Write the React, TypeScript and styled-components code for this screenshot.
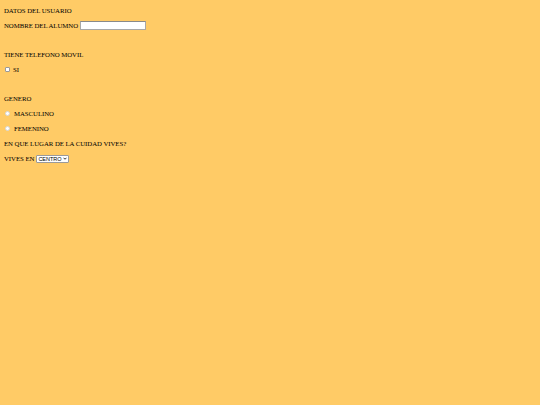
import React from 'react';
import styled, { createGlobalStyle } from 'styled-components';

const GlobalStyle = createGlobalStyle`
  html, body {
    margin: 0;
    padding: 0;
    background: #ffcb66;
  }
  body {
    font-family: 'Liberation Serif', 'Times New Roman', serif;
    color: #000;
  }
`;

const Page = styled.form`
  min-height: 405px;
  box-sizing: border-box;
  padding: 6px 4px 0 4px;
  display: flex;
  flex-direction: column;
  gap: 6px;
  background: #ffcb66;
`;

const Row = styled.div<{ $spaced?: boolean }>`
  display: flex;
  align-items: center;
  height: 9px;
  line-height: 9px;
  font-size: 6.8px;
  letter-spacing: -0.05px;
  white-space: nowrap;
  margin-top: ${(props) => (props.$spaced ? '14px' : '0')};
`;

const TextInput = styled.input`
  box-sizing: border-box;
  width: 66px;
  height: 9px;
  margin: 0 0 0 2px;
  padding: 0 1px;
  border: 1px solid #a8a8a8;
  border-top-color: #8a8a8a;
  background: #fff;
  font-size: 6px;
  outline: none;
`;

const Check = styled.input<{ $round?: boolean }>`
  appearance: none;
  box-sizing: border-box;
  width: 5px;
  height: 5px;
  margin: 0 3px 0 1px;
  background: #fff;
  border: 1px solid ${(props) => (props.$round ? '#d6d6d6' : '#9a9a9a')};
  border-radius: ${(props) => (props.$round ? '50%' : '1px')};
`;

const RadioLabel = styled.span`
  margin-left: 1px;
`;

const SelectBox = styled.label`
  position: relative;
  display: inline-flex;
  align-items: center;
  box-sizing: border-box;
  width: 33px;
  height: 8px;
  margin-left: 2px;
  border: 1px solid #9a9a9a;
  border-radius: 1px;
  background: #fff;
`;

const Select = styled.select`
  appearance: none;
  width: 100%;
  height: 100%;
  border: none;
  outline: none;
  background: transparent;
  padding: 0 0 0 1px;
  margin: 0;
  font-family: 'Liberation Sans', Arial, sans-serif;
  font-size: 5.5px;
  letter-spacing: 0;
  line-height: 6px;
  color: #000;
`;

const Chevron = styled.svg`
  position: absolute;
  right: 1.5px;
  top: 1.5px;
  width: 4px;
  height: 3px;
  pointer-events: none;
`;

export default function App() {
  return (
    <>
      <GlobalStyle />
      <Page>
        <Row>DATOS DEL USUARIO</Row>
        <Row>
          NOMBRE DEL ALUMNO
          <TextInput type="text" name="nombre" />
        </Row>

        <Row $spaced>TIENE TELEFONO MOVIL</Row>
        <Row>
          <Check type="checkbox" name="movil" />
          SI
        </Row>

        <Row $spaced>GENERO</Row>
        <Row>
          <Check type="radio" name="genero" $round />
          <RadioLabel>MASCULINO</RadioLabel>
        </Row>
        <Row>
          <Check type="radio" name="genero" $round />
          <RadioLabel>FEMENINO</RadioLabel>
        </Row>
        <Row>EN QUE LUGAR DE LA CUIDAD VIVES?</Row>
        <Row>
          VIVES EN
          <SelectBox>
            <Select defaultValue="centro" name="lugar">
              <option value="centro">CENTRO</option>
              <option value="norte">NORTE</option>
              <option value="sur">SUR</option>
            </Select>
            <Chevron viewBox="0 0 8 6">
              <path d="M1 1.5 L4 4.5 L7 1.5" fill="none" stroke="#000" strokeWidth="1.6" />
            </Chevron>
          </SelectBox>
        </Row>
      </Page>
    </>
  );
}
